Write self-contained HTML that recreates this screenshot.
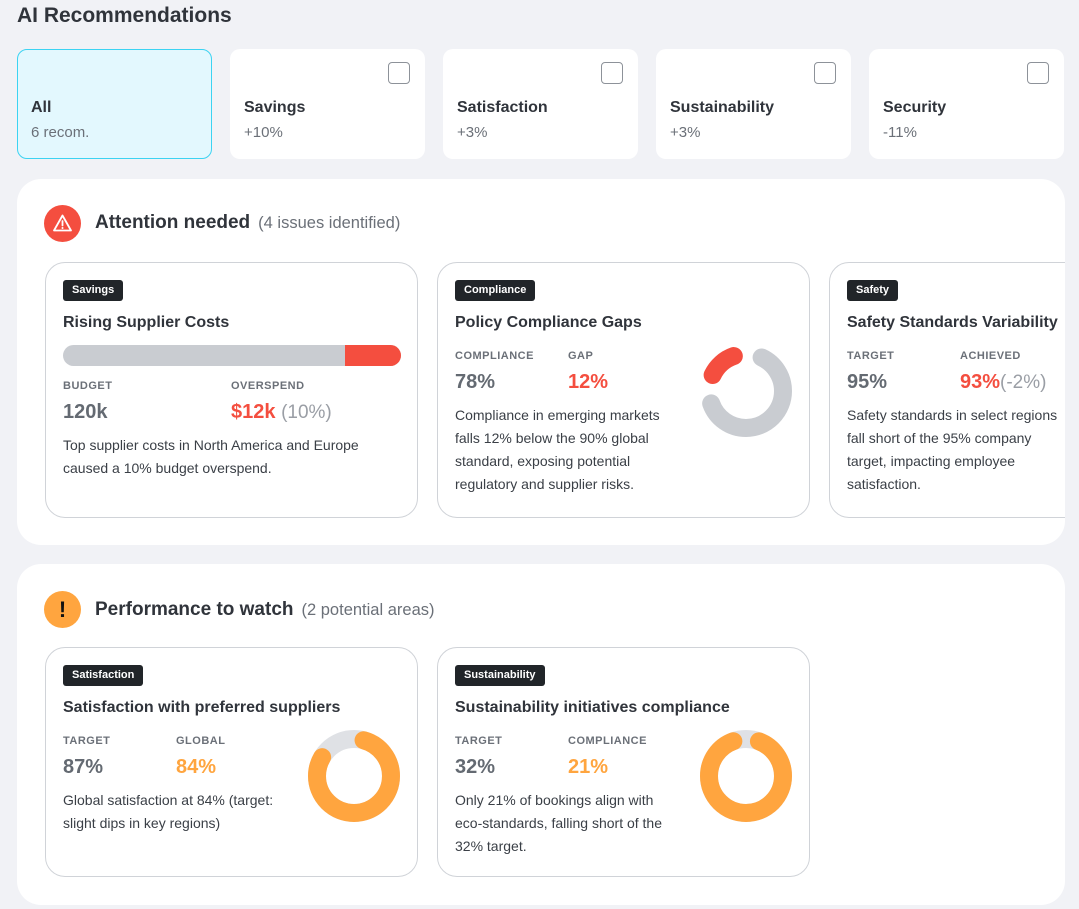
<!DOCTYPE html>
<html><head><meta charset="utf-8"><style>
*{box-sizing:border-box;margin:0;padding:0}
body{width:1079px;height:909px;background:#f1f2f6;font-family:"Liberation Sans",sans-serif;color:#2b2f36;position:relative;overflow:hidden}
.a{position:absolute}
h1{position:absolute;left:17px;top:4px;font-size:21px;font-weight:bold;color:#30343b}
.f{position:absolute;top:49px;width:195px;height:110px;background:#fff;border-radius:10px}
.f b{position:absolute;left:14px;top:50px;font-size:16px;color:#30343b}
.f span{position:absolute;left:14px;top:75px;font-size:15px;color:#6b7078}
.f i{position:absolute;right:15px;top:13px;width:22px;height:22px;border:1.5px solid #8d9299;border-radius:4px}
.sec{position:absolute;left:17px;width:1048px;background:#fff;border-radius:24px;overflow:hidden}
.ic{position:absolute;left:27px;width:37px;height:37px;border-radius:50%}
.hd{position:absolute;left:78px;font-size:19px;font-weight:bold;color:#30343b}
.hd span{font-weight:normal;font-size:16.5px;color:#6b7078;margin-left:8px}
.c{position:absolute;width:373px;height:256px;border:1px solid #d0d3d8;border-radius:20px;background:#fff}
.tag{position:absolute;left:17px;top:17px;height:21px;line-height:21px;padding:0 9px;background:#212529;color:#fff;font-size:11px;font-weight:bold;border-radius:3px}
.t{position:absolute;left:17px;top:51px;font-size:16px;font-weight:bold;color:#30343b;white-space:nowrap}
.l{position:absolute;font-size:11px;font-weight:bold;color:#6b7078;letter-spacing:.5px}
.v{position:absolute;font-size:20px;font-weight:bold;color:#646a72;white-space:nowrap}
.v span{font-weight:normal;color:#9a9ea5;font-size:19px}
.d{position:absolute;left:17px;font-size:14px;line-height:23px;color:#3a3f46;white-space:nowrap}
.red{color:#f44e3f!important}.org{color:#ffa53f!important}
</style></head><body>
<h1>AI Recommendations</h1>
<div class="f" style="left:17px;background:#e3f8fe;border:1.5px solid #3cd3f2"><b style="left:13px;top:49px">All</b><span style="left:13px;top:74px">6 recom.</span></div>
<div class="f" style="left:230px"><i></i><b>Savings</b><span>+10%</span></div>
<div class="f" style="left:443px"><i></i><b>Satisfaction</b><span>+3%</span></div>
<div class="f" style="left:656px"><i></i><b>Sustainability</b><span>+3%</span></div>
<div class="f" style="left:869px"><i></i><b>Security</b><span>-11%</span></div>

<div class="sec" style="top:179px;height:366px">
 <div class="ic" style="top:26px;background:#f44e3f"><svg width="37" height="37" viewBox="0 0 37 37"><path d="M18.5 10.5 L27 25.5 H10 Z" fill="none" stroke="#fff" stroke-width="1.8" stroke-linejoin="round"/><path d="M18.5 16v4.5" stroke="#fff" stroke-width="1.8" stroke-linecap="round"/><circle cx="18.5" cy="23" r="1" fill="#fff"/></svg></div>
 <div class="hd" style="top:33px">Attention needed<span>(4 issues identified)</span></div>

 <div class="c" style="left:28px;top:83px">
  <div class="tag">Savings</div><div class="t">Rising Supplier Costs</div>
  <div class="a" style="left:17px;top:82px;width:338px;height:21px;border-radius:11px;background:#c9ccd1;overflow:hidden"><div class="a" style="left:282px;top:0;width:56px;height:21px;background:#f44e3f"></div></div>
  <div class="l" style="left:17px;top:117px">BUDGET</div><div class="l" style="left:185px;top:117px">OVERSPEND</div>
  <div class="v" style="left:17px;top:138px">120k</div><div class="v red" style="left:185px;top:138px">$12k <span>(10%)</span></div>
  <div class="d" style="top:171px">Top supplier costs in North America and Europe<br>caused a 10% budget overspend.</div>
 </div>

 <div class="c" style="left:420px;top:83px">
  <div class="tag">Compliance</div><div class="t">Policy Compliance Gaps</div>
  <div class="l" style="left:17px;top:87px">COMPLIANCE</div><div class="l" style="left:130px;top:87px">GAP</div>
  <div class="v" style="left:17px;top:108px">78%</div><div class="v red" style="left:130px;top:108px">12%</div>
  <div class="d" style="top:141px">Compliance in emerging markets<br>falls 12% below the 90% global<br>standard, exposing potential<br>regulatory and supplier risks.</div>
  <svg class="a" style="left:262px;top:82px" width="92" height="92" viewBox="0 0 92 92"><g transform="rotate(-90 46 46)" fill="none" stroke-width="18" stroke-linecap="round"><circle cx="46" cy="46" r="37" stroke="#c9ccd1" stroke-dasharray="145.3 300" stroke-dashoffset="-16.1"/><circle cx="46" cy="46" r="37" stroke="#f44e3f" stroke-dasharray="29.1 300" stroke-dashoffset="-190.6"/></g></svg>
 </div>

 <div class="c" style="left:812px;top:83px">
  <div class="tag">Safety</div><div class="t">Safety Standards Variability</div>
  <div class="l" style="left:17px;top:87px">TARGET</div><div class="l" style="left:130px;top:87px">ACHIEVED</div>
  <div class="v" style="left:17px;top:108px">95%</div><div class="v red" style="left:130px;top:108px">93%<span>(-2%)</span></div>
  <div class="d" style="top:141px">Safety standards in select regions<br>fall short of the 95% company<br>target, impacting employee<br>satisfaction.</div>
 </div>
</div>

<div class="sec" style="top:564px;height:341px">
 <div class="ic" style="top:27px;background:#ffa53f;color:#111;font-weight:bold;font-size:22px;text-align:center;line-height:37px">!</div>
 <div class="hd" style="top:35px">Performance to watch<span>(2 potential areas)</span></div>

 <div class="c" style="left:28px;top:83px;height:230px">
  <div class="tag">Satisfaction</div><div class="t">Satisfaction with preferred suppliers</div>
  <div class="l" style="left:17px;top:87px">TARGET</div><div class="l" style="left:130px;top:87px">GLOBAL</div>
  <div class="v" style="left:17px;top:108px">87%</div><div class="v org" style="left:130px;top:108px">84%</div>
  <div class="d" style="top:141px">Global satisfaction at 84% (target:<br>slight dips in key regions)</div>
  <svg class="a" style="left:262px;top:82px" width="92" height="92" viewBox="0 0 92 92"><circle cx="46" cy="46" r="37" fill="none" stroke="#dfe1e5" stroke-width="18"/><g transform="rotate(-90 46 46)" fill="none" stroke-width="18" stroke-linecap="round"><circle cx="46" cy="46" r="37" stroke="#ffa53f" stroke-dasharray="184.1 300" stroke-dashoffset="-9.7"/></g></svg>
 </div>

 <div class="c" style="left:420px;top:83px;height:230px">
  <div class="tag">Sustainability</div><div class="t">Sustainability initiatives compliance</div>
  <div class="l" style="left:17px;top:87px">TARGET</div><div class="l" style="left:130px;top:87px">COMPLIANCE</div>
  <div class="v" style="left:17px;top:108px">32%</div><div class="v org" style="left:130px;top:108px">21%</div>
  <div class="d" style="top:141px">Only 21% of bookings align with<br>eco-standards, falling short of the<br>32% target.</div>
  <svg class="a" style="left:262px;top:82px" width="92" height="92" viewBox="0 0 92 92"><circle cx="46" cy="46" r="37" fill="none" stroke="#dfe1e5" stroke-width="18"/><g transform="rotate(-90 46 46)" fill="none" stroke-width="18" stroke-linecap="round"><circle cx="46" cy="46" r="37" stroke="#ffa53f" stroke-dasharray="206 300" stroke-dashoffset="-13.2"/></g></svg>
 </div>
</div>
</body></html>
